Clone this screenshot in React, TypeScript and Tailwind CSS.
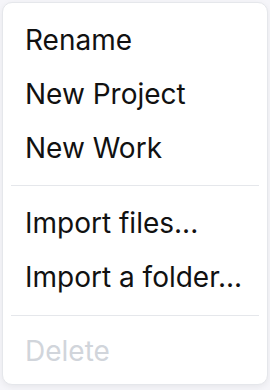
import React from "react";

const Item = ({ children, disabled, h = "h-[54px]" }: { children: React.ReactNode; disabled?: boolean; h?: string }) => (
  <div
    className={`${h} flex items-center px-[22px] text-[28px] leading-none ${
      disabled ? "text-[#d1d5db]" : "text-[#111111]"
    }`}
  >
    {children}
  </div>
);

export default function App() {
  return (
    <div
      className="w-[270px] h-[390px] bg-[#f5f5f9] p-[2px]"
      style={{ fontFamily: "Inter, 'Noto Sans', sans-serif" }}
    >
      <div className="w-[266px] rounded-[10px] border border-[#e5e7eb] bg-white pt-[10px] pb-[7px] shadow-[0_2px_6px_rgba(0,0,0,0.06)]">
        <Item>Rename</Item>
        <Item>New Project</Item>
        <Item>New Work</Item>
        <div className="mx-[8px] my-[10px] h-px bg-[#e5e7eb]" />
        <Item>Import files...</Item>
        <Item>Import a folder...</Item>
        <div className="mx-[8px] mt-[11px] mb-[9px] h-px bg-[#e5e7eb]" />
        <Item disabled h="h-[52px]">Delete</Item>
      </div>
    </div>
  );
}
